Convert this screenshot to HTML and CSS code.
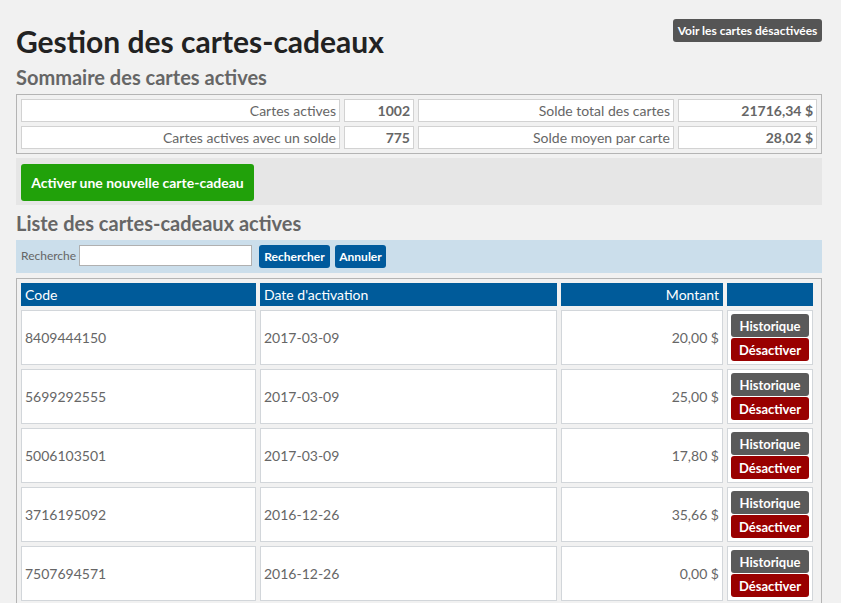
FILE: index.html
```html
<!DOCTYPE html>
<html lang="fr">
<head>
<meta charset="utf-8">
<title>Gestion des cartes-cadeaux</title>
<link rel="stylesheet" href="styles.css">
</head>
<body>
<div class="page">
  <header class="top">
    <h1 class="title">Gestion des cartes-cadeaux</h1>
    <a class="btn btn-dark">Voir les cartes désactivées</a>
  </header>

  <h2 class="subtitle">Sommaire des cartes actives</h2>
  <div class="summary">
    <div class="s-cell">Cartes actives</div>
    <div class="s-cell s-val">1002</div>
    <div class="s-cell">Solde total des cartes</div>
    <div class="s-cell s-val">21716,34 $</div>
    <div class="s-cell">Cartes actives avec un solde</div>
    <div class="s-cell s-val">775</div>
    <div class="s-cell">Solde moyen par carte</div>
    <div class="s-cell s-val">28,02 $</div>
  </div>

  <div class="actionbar">
    <a class="btn btn-green">Activer une nouvelle carte-cadeau</a>
  </div>

  <h2 class="subtitle subtitle-list">Liste des cartes-cadeaux actives</h2>
  <div class="searchbar">
    <label class="search-label" for="q">Recherche</label>
    <input class="search-input" id="q" type="text">
    <a class="btn btn-blue btn-search">Rechercher</a>
    <a class="btn btn-blue btn-cancel">Annuler</a>
  </div>

  <div class="list">
    <div class="grid">
      <div class="h-cell">Code</div>
      <div class="h-cell">Date d'activation</div>
      <div class="h-cell num">Montant</div>
      <div class="h-cell"></div>

      <div class="d-cell">8409444150</div>
      <div class="d-cell">2017-03-09</div>
      <div class="d-cell num">20,00 $</div>
      <div class="d-cell acts"><a class="btn btn-hist">Historique</a><a class="btn btn-red">Désactiver</a></div>

      <div class="d-cell">5699292555</div>
      <div class="d-cell">2017-03-09</div>
      <div class="d-cell num">25,00 $</div>
      <div class="d-cell acts"><a class="btn btn-hist">Historique</a><a class="btn btn-red">Désactiver</a></div>

      <div class="d-cell">5006103501</div>
      <div class="d-cell">2017-03-09</div>
      <div class="d-cell num">17,80 $</div>
      <div class="d-cell acts"><a class="btn btn-hist">Historique</a><a class="btn btn-red">Désactiver</a></div>

      <div class="d-cell">3716195092</div>
      <div class="d-cell">2016-12-26</div>
      <div class="d-cell num">35,66 $</div>
      <div class="d-cell acts"><a class="btn btn-hist">Historique</a><a class="btn btn-red">Désactiver</a></div>

      <div class="d-cell">7507694571</div>
      <div class="d-cell">2016-12-26</div>
      <div class="d-cell num">0,00 $</div>
      <div class="d-cell acts"><a class="btn btn-hist">Historique</a><a class="btn btn-red">Désactiver</a></div>
    </div>
  </div>
</div>
</body>
</html>
```

FILE: styles.css
```css
* {
  box-sizing: border-box;
}

html, body {
  margin: 0;
  padding: 0;
  background: #f1f1f1;
  font-family: Lato, "Open Sans", "Liberation Sans", sans-serif;
  color: #666;
  overflow: hidden;
}

.page {
  padding: 19px 19px 0 16px;
}

.top {
  display: flex;
  justify-content: space-between;
  align-items: flex-start;
}

.title {
  margin: 4px 0 0 0;
  font-size: 30px;
  line-height: 36px;
  font-weight: 700;
  color: #222;
}

.subtitle {
  margin: 6px 0 0 0;
  font-size: 20px;
  line-height: 24px;
  font-weight: 700;
  color: #666;
}

.btn {
  display: inline-flex;
  align-items: center;
  justify-content: center;
  height: 23px;
  padding: 0 5px;
  border-radius: 3px;
  color: #fff;
  font-size: 12px;
  font-weight: 700;
  white-space: nowrap;
  cursor: pointer;
}

.btn-dark {
  background: #555;
  width: 149px;
}

.summary {
  margin-top: 5px;
  display: grid;
  grid-template-columns: 319px 70px 256px 139px;
  gap: 4px;
  padding: 4px;
  border: 1px solid #b4b4b4;
}

.s-cell {
  height: 23px;
  line-height: 21px;
  border: 1px solid #d2d2d2;
  background: #fff;
  text-align: right;
  padding-right: 3px;
  font-size: 14px;
  color: #666;
}

.s-val {
  font-weight: 700;
}

.actionbar {
  margin-top: 4px;
  background: #e6e6e6;
  padding: 6px 5px 4px;
  height: 47px;
}

.btn-green {
  background: #21a10a;
  height: 37px;
  padding: 0 10px;
  font-size: 14px;
  width: 233px;
}

.subtitle-list {
  margin-top: 6px;
}

.searchbar {
  margin-top: 5px;
  background: #cbdeeb;
  height: 33px;
  padding: 5px 5px 0;
  display: flex;
  align-items: flex-start;
}

.search-label {
  font-size: 12px;
  line-height: 21px;
  color: #666;
  width: 58px;
}

.search-input {
  width: 173px;
  height: 21px;
  margin: 0 7px 0 0;
  border: 1px solid #b0b0b0;
  background: #fff;
  padding: 0 3px;
  font: inherit;
}

.btn-blue {
  background: #005a9c;
  margin-right: 5px;
}

.btn-search {
  width: 71px;
}

.btn-cancel {
  width: 51px;
}

.list {
  margin-top: 5px;
  border: 1px solid #b4b4b4;
  height: 400px;
}

.grid {
  display: grid;
  grid-template-columns: 235px 297px 162px 86px;
  gap: 4px;
  padding: 4px;
}

.h-cell {
  height: 23px;
  line-height: 21px;
  background: #005b9a;
  border: 1px solid #005b9a;
  color: #fff;
  font-size: 14px;
  padding: 0 3px;
}

.d-cell {
  height: 55px;
  border: 1px solid #d2d6da;
  background: #fff;
  font-size: 14px;
  color: #666;
  padding: 0 3px;
  display: flex;
  align-items: center;
}

.num {
  justify-content: flex-end;
  text-align: right;
}

.acts {
  flex-direction: column;
  align-items: stretch;
  justify-content: center;
  gap: 1px;
  padding: 3px;
}

.btn-hist {
  background: #5a5a5a;
  font-size: 13px;
}

.btn-red {
  background: #990000;
  font-size: 13px;
}
```
